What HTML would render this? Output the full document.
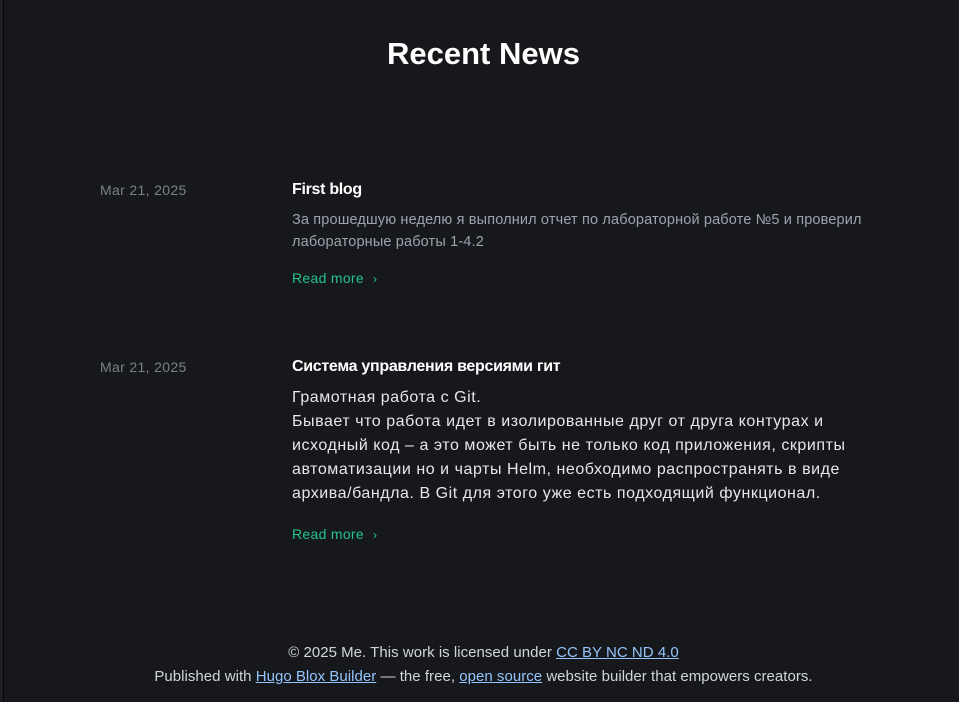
<!DOCTYPE html>
<html><head><meta charset="utf-8">
<style>
html,body{margin:0;padding:0}
body{width:959px;height:702px;background:#17181c;position:relative;overflow:hidden;font-family:"Liberation Sans","DejaVu Sans",sans-serif;color:#e5e7eb}
.strip{position:absolute;left:0;top:0;width:3px;height:702px;background:#1d1f24}
.line{position:absolute;left:3px;top:0;width:1px;height:702px;background:#050507}
h1{position:absolute;top:36px;left:0;width:967px;text-align:center;margin:0;font-size:31px;font-weight:bold;color:#fff;letter-spacing:0}
.date{position:absolute;left:100px;font-size:14px;color:#7b7f87;letter-spacing:0.35px;white-space:nowrap}
.title{position:absolute;left:292px;font-size:16px;font-weight:bold;color:#fff;letter-spacing:-0.3px;white-space:nowrap}
.sum{position:absolute;left:292px;font-size:14.5px;line-height:22px;color:#9ca3af;letter-spacing:0.15px;white-space:nowrap}
.sum2{position:absolute;left:292px;font-size:16px;line-height:24px;color:#e5e7eb;letter-spacing:0.55px;white-space:nowrap}
.rm{position:absolute;left:292px;font-size:14px;color:#22c58b;letter-spacing:0.3px}
.rm span{font-size:12px;margin-left:9px}
.foot{position:absolute;left:0;width:967px;text-align:center;font-size:15px;color:#d1d5db;letter-spacing:0.03px;white-space:nowrap}
.foot a{color:#93c5fd;text-decoration:underline}
</style></head><body>
<div class="strip"></div><div class="line"></div>
<h1>Recent News</h1>
<div class="date" style="top:182px">Mar 21, 2025</div>
<div class="title" style="top:181px">First blog</div>
<div class="sum" style="top:209px">За прошедшую неделю я выполнил отчет по лабораторной работе №5 и проверил<br>лабораторные работы 1-4.2</div>
<div class="rm" style="top:270px">Read more<span>›</span></div>
<div class="date" style="top:359px">Mar 21, 2025</div>
<div class="title" style="top:358px">Система управления версиями гит</div>
<div class="sum2" style="top:386px">Грамотная работа с Git.<br>Бывает что работа идет в изолированные друг от друга контурах и<br>исходный код – а это может быть не только код приложения, скрипты<br>автоматизации но и чарты Helm, необходимо распространять в виде<br>архива/бандла. В Git для этого уже есть подходящий функционал.</div>
<div class="rm" style="top:526px">Read more<span>›</span></div>
<div class="foot" style="top:644px">© 2025 Me. This work is licensed under <a>CC BY NC ND 4.0</a></div>
<div class="foot" style="top:668px">Published with <a>Hugo Blox Builder</a> — the free, <a>open source</a> website builder that empowers creators.</div>
</body></html>
